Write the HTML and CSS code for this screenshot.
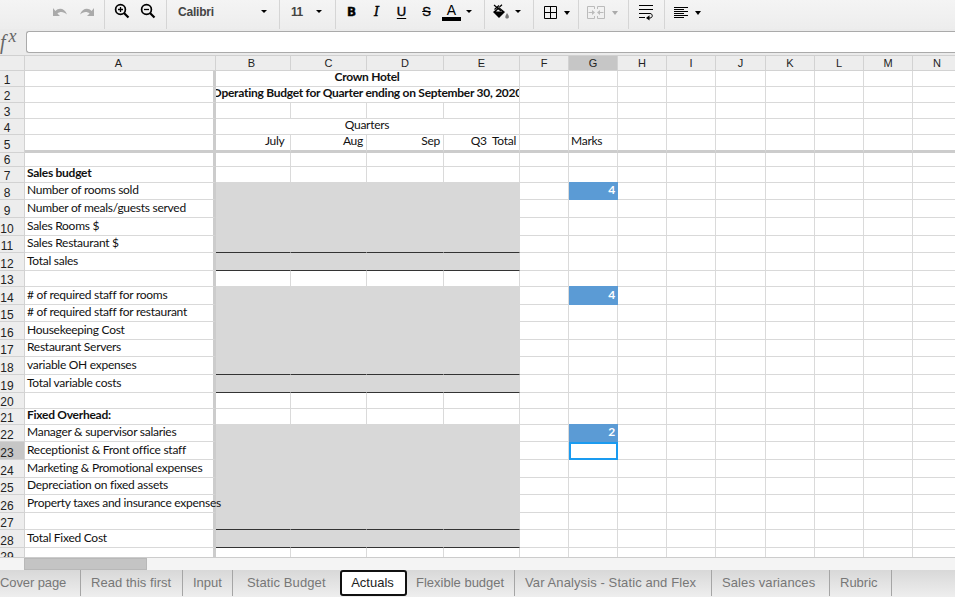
FILE: index.html
```
<!DOCTYPE html>
<html lang="en">
<head>
    <meta charset="UTF-8">
    <meta name="viewport" content="width=device-width, initial-scale=1.0">
    <title>Crown Hotel - Operating Budget</title>
    <link rel="stylesheet" href="styles.css">
</head>
<body>
    <div class="toolbar">
        <div class="group history">
            <svg width="16" height="12" viewBox="0 0 16 12"><path d="M1 2v8h7L5.400 7.400C8 5 12 5.500 15 8.500 13 2.500 7 1 3.400 5z" fill="#aaa"/></svg>
            <svg width="16" height="12" viewBox="0 0 16 12"><path d="M15 2v8H8l2.600-2.600C8 5 4 5.500 1 8.500 3 2.500 9 1 12.600 5z" fill="#aaa"/></svg>
        </div>
        <div class="group zoom">
            <svg width="16" height="16" viewBox="0 0 16 16" fill="none" stroke="#000" stroke-width="1.700"><circle cx="6.500" cy="6.500" r="4.900"/><path d="M10 10l4.500 4.500" stroke-width="2.200"/><path d="M6.500 4v5M4 6.500h5" stroke-width="1.300"/></svg>
            <svg width="16" height="16" viewBox="0 0 16 16" fill="none" stroke="#000" stroke-width="1.700"><circle cx="6.500" cy="6.500" r="4.900"/><path d="M10 10l4.500 4.500" stroke-width="2.200"/><path d="M4 6.500h5" stroke-width="1.300"/></svg>
        </div>
        <div class="group font-name"><span>Calibri</span><i class="caret"></i></div>
        <div class="group font-size"><span>11</span><i class="caret"></i></div>
        <div class="group styles">
            <b class="bold">B</b>
            <b class="italic">I</b>
            <b class="underline">U</b>
            <b class="strike">S</b>
            <span class="color">A</span>
            <i class="caret"></i>
        </div>
        <div class="group fill">
            <svg width="18" height="16" viewBox="0 0 18 16"><path d="M1 8l6-5 6 5-6 6z"/><path d="M4 7.500h6L7 4.500z" fill="#f2f2f2"/><path d="M2 1l7 6M7.500 3L10 .7M2.500 5.500L7 1.500" stroke="#000" stroke-width="1.200" fill="none"/><path d="M15 9c3 4 2 5.500 0 5.500S12.500 13 15 9z" fill="#777"/></svg>
            <i class="caret"></i>
        </div>
        <div class="group borders">
            <svg width="13" height="13" viewBox="0 0 13 13" fill="none" stroke="#000"><path d="M.5.5h12v12H.5zM6.500 0v13M0 6.500h13"/></svg>
            <i class="caret wide"></i>
        </div>
        <div class="group merge">
            <svg width="18" height="13" viewBox="0 0 18 13" fill="none" stroke="#bbb"><path d="M7.500 3V.5h-7v12h7V10M10.500 3V.5h7v12h-7V10M1.500 6.500h5M16.500 6.500h-5"/><path d="M5 4l3 2.500L5 9zM13 4l-3 2.500L13 9z" fill="#bbb" stroke="none"/></svg>
            <i class="caret wide off"></i>
        </div>
        <div class="group wrap">
            <svg width="14" height="16" viewBox="0 0 14 16" fill="none" stroke="#000"><path d="M0 .5h14M0 4.500h14M0 12.500h6"/><path d="M0 8.500h11c3 0 3 4.500 0 4.500H9"/><path d="M10.500 10.300v5.200L7 13z" fill="#000" stroke="none"/></svg>
        </div>
        <div class="group align">
            <svg width="14" height="11" viewBox="0 0 14 11" stroke="#000"><path d="M0 .5h14M0 2.500h10M0 4.500h14M0 6.500h10M0 8.500h14M0 10.500h10"/></svg>
            <i class="caret wide"></i>
        </div>
    </div>

    <div class="formula-bar">
        <div class="fx">f<sup>x</sup></div>
        <div class="formula-input"></div>
    </div>

    <div class="sheet" id="sheet"></div>

    <div class="scrollbar"><div class="thumb"></div></div>

    <div class="tabs">
        <div class="tab t1">Cover page</div>
        <div class="tab t2">Read this first</div>
        <div class="tab t3">Input</div>
        <div class="tab t4">Static Budget</div>
        <div class="tab active">Actuals</div>
        <div class="tab t6">Flexible budget</div>
        <div class="tab t7">Var Analysis - Static and Flex</div>
        <div class="tab t8">Sales variances</div>
        <div class="tab t9">Rubric</div>
    </div>

    <script src="sheet.js"></script>
</body>
</html>
```
FILE: styles.css
```
* { box-sizing: border-box; }
body {
    margin: 0;
    height: 597px;
    overflow: hidden;
    display: flex;
    flex-direction: column;
    background: #ebebeb;
    font-family: "Liberation Sans", Arial, sans-serif;
}
svg { display: block; flex: none; }

/* Toolbar */
.toolbar {
    height: 29px;
    flex: none;
    display: flex;
    background: linear-gradient(#f4f4f4, #ededed);
}
.group {
    flex: none;
    display: flex;
    align-items: flex-start;
    border-right: 1px solid #d5d5d5;
    font-size: 12px;
    font-weight: bold;
    color: #444;
}
.group:last-child { border-right: none; }
.history { width: 105px; padding: 6px 0 0 52px; gap: 11px; }
.zoom { width: 62px; padding: 3px 0 0 9px; gap: 10px; }
.font-name { width: 113px; padding: 5px 12px 0 11px; justify-content: space-between; letter-spacing: -0.2px; }
.font-size { width: 56px; padding: 5px 13px 0 11px; justify-content: space-between; letter-spacing: -0.5px; }
.font-name .caret, .font-size .caret { margin-top: 5px; }
.styles { width: 149px; padding-left: 3px; color: #000; }
.fill { width: 49px; padding: 4px 0 0 7px; }
.fill .caret { margin: 6px 0 0 5px; }
.borders { width: 45px; padding: 6px 0 0 10px; gap: 7px; }
.merge { width: 50px; padding: 6px 0 0 8px; gap: 7px; }
.wrap { width: 36px; padding: 5px 0 0 10px; }
.align { width: 60px; padding: 7px 0 0 9px; gap: 7px; }
.align .caret { margin-top: 4px; }
.borders .caret, .merge .caret { margin-top: 5px; }
.caret {
    width: 0;
    height: 0;
    border: 3px solid transparent;
    border-top-color: #000;
    border-bottom: none;
}
.caret.wide { border-width: 4px 3.5px 0; }
.caret.off { border-top-color: #aaa; }
.styles b, .color {
    width: 25px;
    height: 20px;
    padding-top: 4px;
    text-align: center;
    font-size: 14px;
    line-height: 16px;
}
.styles .bold { font-family: "DejaVu Sans", sans-serif; font-size: 12px; -webkit-text-stroke: 0.4px; }
.styles .italic { font-family: "DejaVu Serif", serif; font-size: 13px; font-style: italic; font-weight: normal; -webkit-text-stroke: 0.4px; }
.styles .underline { font-size: 13px; text-decoration: underline; text-underline-offset: 2px; font-weight: normal; -webkit-text-stroke: 0.4px; }
.styles .strike { font-size: 13px; text-decoration: line-through; font-weight: normal; -webkit-text-stroke: 0.3px; }
.styles .color {
    width: 19px;
    margin-left: 3px;
    padding-top: 2px;
    height: 21px;
    font-weight: normal;
    border-bottom: 4px solid #000;
}
.styles .caret { margin: 10px 0 0 5px; }

/* Formula bar */
.formula-bar {
    height: 26px;
    flex: none;
    display: flex;
    padding-top: 2px;
    background: #ebebeb;
}
.fx {
    width: 26px;
    flex: none;
    font: italic 20px/22px "Liberation Serif", serif;
    color: #666;
    white-space: nowrap;
}
.fx sup { font-size: 18px; line-height: 0; vertical-align: 7px; margin-left: 3px; }
.formula-input {
    flex: 1;
    height: 22px;
    border: 1px solid #aaa;
    border-right: none;
    border-radius: 3px 0 0 3px;
    background: #fff;
}

/* Spreadsheet grid */
.sheet {
    height: 503px;
    flex: none;
    overflow: hidden;
    background: #fff;
    border-top: 1px solid #d0d0d0;
    border-bottom: 1px solid #ccc;
}
.row {
    display: grid;
    grid-template-columns: 25px 191px 75px 76px 77px 76px 49px 49px 49px 49px 50px repeat(4, 49px);
    grid-template-rows: 100%;
    width: 962px;
}
.cell {
    display: flex;
    align-items: flex-end;
    padding: 0 3px 3px 2px;
    min-width: 0;
    min-height: 0;
    border-right: 1px solid #dadada;
    border-bottom: 1px solid #d9d9d9;
    font: 12px/13px Lato, sans-serif;
    letter-spacing: -0.27px;
    white-space: pre;
    color: #111;
}
.cell.label { border-right: 3px solid #ccc; position: relative; }
.cell.strong { font-weight: bold; }
.cell.right { justify-content: flex-end; }
.cell.merged {
    grid-column: span 4;
    justify-content: center;
    overflow-x: clip;
    overflow-clip-margin: content-box;
    padding: 0 2px 3px 1px;
}
.cell.shade { background: #d8d8d8; border-color: #d8d8d8; }
.cell.shade.first { box-shadow: 0 -1px #d8d8d8; }
.cell.line { border-bottom-color: #333; }
.cell.mark {
    background: #5b9bd5;
    border-color: #5b9bd5;
    box-shadow: 0 -1px #5b9bd5;
    color: #fff;
    font-weight: bold;
    justify-content: flex-end;
    padding-right: 2px;
}
.cell.selected { outline: 2px solid #1a9bf0; outline-offset: -2px; }
.cell.head, .cell.num {
    justify-content: center;
    padding: 0;
    background: #ededed;
    border-color: #d2d2d2;
    font: 11px/14px "Liberation Sans", sans-serif;
    letter-spacing: 0;
    color: #222;
}
.cell.head.a, .cell.head.b { padding-right: 3px; }
.cell.num { padding: 0 10px 0 0; font-size: 12px; line-height: 12px; }
.cell.head.current, .cell.num.current { background: #c6c6c6; }
.frozen .cell { border-bottom: 3px solid #ccc; }
.frozen .cell.num { border-bottom: 1px solid #d2d2d2; padding-bottom: 1px; }
.cut .cell.num { align-items: flex-start; padding-top: 3px; }

/* Scrollbar and sheet tabs */
.scrollbar {
    height: 12px;
    flex: none;
    padding-left: 24px;
    background: #f4f4f4;
}
.thumb {
    width: 123px;
    height: 12px;
    background: #c4c4c4;
    border: 1px solid #b8b8b8;
}
.tabs {
    height: 27px;
    flex: none;
    display: flex;
    background: linear-gradient(#d8d8d8, #eee);
}
.tab {
    flex: none;
    height: 26px;
    border-right: 1px solid #a5a5a5;
    font-size: 13px;
    line-height: 25px;
    color: #777;
    white-space: nowrap;
}
.tab.active {
    width: 67px;
    background: #fff;
    border: 2px solid #111;
    border-radius: 3px;
    line-height: 21px;
    padding-right: 2px;
    text-align: center;
    color: #222;
}
.t1 { width: 81px; letter-spacing: -0.1px; }
.t2 { width: 102px; padding-left: 10px; letter-spacing: 0.05px; }
.t3 { width: 50px; padding-left: 10px; }
.t4 { width: 107px; padding-left: 14px; border-right: none; letter-spacing: 0.1px; }
.t6 { width: 108px; padding-left: 9px; }
.t7 { width: 197px; padding-left: 10px; letter-spacing: 0.1px; }
.t8 { width: 118px; padding-left: 10px; letter-spacing: 0.1px; }
.t9 { width: 62px; padding-left: 10px; }
```
FILE: sheet.js
```
const columns = 'ABCDEFGHIJKLMN'.split('');

// height in px, text of column A, and what stands in the other columns
const rows = [
    { h: 16, merged: 'Crown Hotel', strong: true },
    { h: 16, merged: 'Operating Budget for Quarter ending on September 30, 2020', strong: true },
    { h: 16 },
    { h: 16, merged: 'Quarters' },
    { h: 18, frozen: true, B: 'July ', C: 'Aug', D: 'Sep', E: 'Q3  Total', G: 'Marks' },
    { h: 14 },
    { h: 16, A: 'Sales budget', strong: true },
    { h: 17, A: 'Number of rooms sold', shade: true, first: true, mark: 4 },
    { h: 18, A: 'Number of meals/guests served', shade: true },
    { h: 18, A: 'Sales Rooms $', shade: true },
    { h: 17, A: 'Sales Restaurant $', shade: true, line: true },
    { h: 18, A: 'Total sales', shade: true, line: true },
    { h: 16 },
    { h: 18, A: '# of required staff for rooms', shade: true, first: true, mark: 4 },
    { h: 17, A: '# of required staff for restaurant', shade: true },
    { h: 18, A: 'Housekeeping Cost', shade: true },
    { h: 17, A: 'Restaurant Servers', shade: true },
    { h: 18, A: 'variable OH expenses', shade: true, line: true },
    { h: 18, A: 'Total variable costs', shade: true, line: true },
    { h: 16 },
    { h: 16, A: 'Fixed Overhead:', strong: true },
    { h: 17, A: 'Manager & supervisor salaries', shade: true, first: true, mark: 2 },
    { h: 18, A: 'Receptionist & Front office staff', shade: true, current: true },
    { h: 18, A: 'Marketing & Promotional expenses', shade: true },
    { h: 17, A: 'Depreciation on fixed assets', shade: true },
    { h: 18, A: 'Property taxes and insurance expenses', shade: true },
    { h: 17, shade: true, line: true },
    { h: 18, A: 'Total Fixed Cost', shade: true, line: true },
    { h: 16, cut: true }
];

const sheet = document.getElementById('sheet');

function addRow(height, className) {
    const row = document.createElement('div');
    row.className = 'row ' + (className || '');
    row.style.height = height + 'px';
    sheet.appendChild(row);
    return row;
}

function addCell(row, text, className) {
    const cell = document.createElement('div');
    cell.className = 'cell ' + className;
    cell.textContent = text === undefined ? '' : text;
    row.appendChild(cell);
}

const header = addRow(15);
addCell(header, '', 'head');
columns.forEach(c => addCell(header, c, 'head ' + c.toLowerCase() + (c === 'G' ? ' current' : '')));

rows.forEach((data, i) => {
    const row = addRow(data.h, data.frozen ? 'frozen' : data.cut ? 'cut' : '');
    const strong = data.strong ? ' strong' : '';
    addCell(row, i + 1, data.current ? 'num current' : 'num');
    columns.forEach(c => {
        const budget = 'BCDE'.includes(c);
        if (c === 'A') {
            addCell(row, data.A, 'label' + strong);
        } else if (budget && data.merged) {
            if (c === 'B') addCell(row, data.merged, 'merged' + strong);
        } else if (budget) {
            addCell(row, data[c], 'right' + (data.shade ? ' shade' : '') +
                (data.first ? ' first' : '') + (data.line ? ' line' : ''));
        } else if (c === 'G' && data.mark) {
            addCell(row, data.mark, 'mark');
        } else if (c === 'G' && data.current) {
            addCell(row, '', 'selected');
        } else {
            addCell(row, data[c], '');
        }
    });
});
```
